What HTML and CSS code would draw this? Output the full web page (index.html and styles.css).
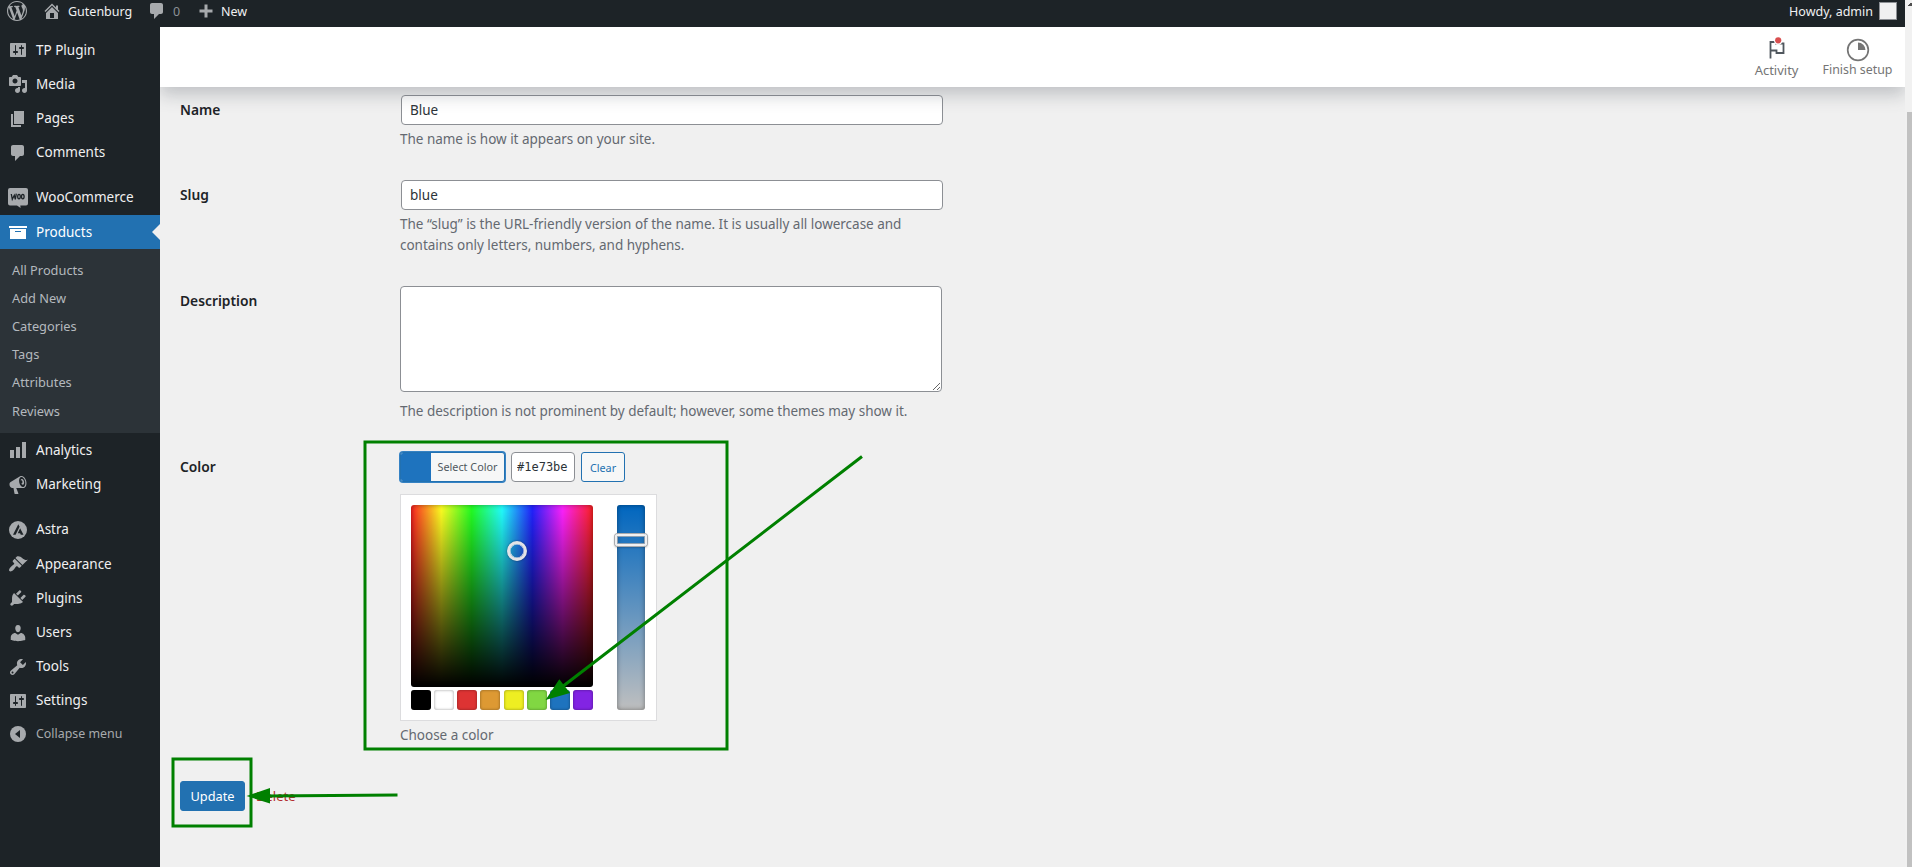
FILE: index.html
```html
<!DOCTYPE html>
<html lang="en">
<head>
<meta charset="utf-8">
<title>Edit Color</title>
<link rel="stylesheet" href="styles.css">
</head>
<body>
<div class="adminbar">
  <svg class="ab-icon ab-wp" viewBox="0 0 20 20"><path d="M20 10c0-5.51-4.49-10-10-10C4.48 0 0 4.49 0 10c0 5.52 4.48 10 10 10 5.51 0 10-4.48 10-10zM7.78 15.37L4.37 6.22c.55-.02 1.17-.08 1.17-.08.5-.06.44-1.13-.06-1.11 0 0-1.45.11-2.37.11-.18 0-.37 0-.58-.01C4.12 2.69 6.87 1.11 10 1.11c2.33 0 4.45.87 6.05 2.34-.68-.11-1.65.39-1.65 1.58 0 .74.45 1.36.9 2.1.35.61.55 1.36.55 2.46 0 1.49-1.4 5-1.4 5l-3.03-8.37c.54-.02.82-.17.82-.17.5-.05.44-1.25-.06-1.22 0 0-1.44.12-2.38.12-.87 0-2.33-.12-2.33-.12-.5-.03-.56 1.2-.06 1.22l.92.08 1.26 3.41zM17.41 10c.24-.64.74-1.87.43-4.25.7 1.29 1.05 2.71 1.05 4.25 0 3.29-1.73 6.24-4.4 7.78.97-2.59 1.94-5.2 2.92-7.78zM6.1 18.09C3.12 16.65 1.11 13.53 1.11 10c0-1.3.23-2.48.72-3.59C3.25 10.3 4.67 14.2 6.1 18.09zm4.03-6.63l2.58 6.98c-.86.29-1.76.45-2.71.45-.79 0-1.57-.11-2.29-.33.81-2.38 1.62-4.74 2.42-7.1z"/></svg>
  <svg class="ab-icon ab-home" viewBox="0 0 20 20"><path d="M16 8.5l1.53 1.53-1.06 1.06L10 4.6l-6.47 6.49-1.06-1.06L10 2.5l4 4v-2h2v4zm-6-2.46l6 5.99V18H4v-5.97zM12 17v-5H8v5h4z"/></svg>
  <span class="ab-site">Gutenburg</span>
  <svg class="ab-icon ab-comment" viewBox="0 0 20 20"><path d="M5 2h9c1.1 0 2 .9 2 2v7c0 1.1-.9 2-2 2h-2l-5 5v-5H5c-1.1 0-2-.9-2-2V4c0-1.1.9-2 2-2z"/></svg>
  <span class="ab-count">0</span>
  <svg class="ab-icon ab-plus" viewBox="0 0 20 20"><path d="M16.5 8.4v3h-5v5h-3v-5h-5v-3h5v-5h3v5z"/></svg>
  <span>New</span>
  <span class="ab-user">Howdy, admin</span>
  <span class="ab-avatar"></span>
</div>

<div class="layout">
  <nav class="sidebar">
    <a class="item"><svg viewBox="0 0 20 20"><path d="M18 16V4c0-.55-.45-1-1-1H3c-.55 0-1 .45-1 1v12c0 .55.45 1 1 1h14c.55 0 1-.45 1-1zM8 11h1c.55 0 1 .45 1 1s-.45 1-1 1H8v1.5c0 .28-.22.5-.5.5s-.5-.22-.5-.5V13H6c-.55 0-1-.45-1-1s.45-1 1-1h1V5.5c0-.28.22-.5.5-.5s.5.22.5.5V11zm5-2h-1c-.55 0-1-.45-1-1s.45-1 1-1h1V5.5c0-.28.22-.5.5-.5s.5.22.5.5V7h1c.55 0 1 .45 1 1s-.45 1-1 1h-1v5.5c0 .28-.22.5-.5.5s-.5-.22-.5-.5V9z"/></svg>TP Plugin</a>
    <a class="item"><svg viewBox="0 0 20 20"><path d="M13 11V4c0-.55-.45-1-1-1h-1.67L9 1H5L3.67 3H2c-.55 0-1 .45-1 1v7c0 .55.45 1 1 1h10c.55 0 1-.45 1-1zM7 4.5c1.38 0 2.5 1.12 2.5 2.5S8.38 9.5 7 9.5 4.5 8.38 4.5 7 5.62 4.5 7 4.5zM14 6h5v10.5c0 1.38-1.12 2.5-2.5 2.5S14 17.88 14 16.5s1.12-2.5 2.5-2.5c.17 0 .34.02.5.05V9h-3V6zm-4 8.05V13h2v3.5c0 1.38-1.12 2.5-2.5 2.5S7 17.88 7 16.5 8.12 14 9.5 14c.17 0 .34.02.5.05z"/></svg>Media</a>
    <a class="item"><svg viewBox="0 0 20 20"><path d="M6 15V2h10v13H6zm-1 1h8v2H3V5h2v11z"/></svg>Pages</a>
    <a class="item"><svg viewBox="0 0 20 20"><path d="M5 2h9c1.1 0 2 .9 2 2v7c0 1.1-.9 2-2 2h-2l-5 5v-5H5c-1.1 0-2-.9-2-2V4c0-1.1.9-2 2-2z"/></svg>Comments</a>
    <a class="item gap"><svg viewBox="0 0 20 20"><path d="M2 0h16a2 2 0 0 1 2 2v13.500a2 2 0 0 1-2 2h-5.700l.3 2.500-3.600-2.500H2a2 2 0 0 1-2-2V2a2 2 0 0 1 2-2z"/><g class="mark"><path d="M3.300 6l1 5.300 2-4 1 4 1-5.600"/><ellipse cx="11" cy="8.600" rx="1.300" ry="2.300"/><ellipse cx="15.200" cy="8.600" rx="1.300" ry="2.300"/></g></svg>WooCommerce</a>
    <a class="item current"><svg viewBox="0 0 20 20"><path d="M19 4v2H1V4h18zM2 7h16v10H2V7zm11 3V9H7v1h6z"/></svg>Products</a>
    <div class="submenu">
      <a>All Products</a><a>Add New</a><a>Categories</a><a>Tags</a><a>Attributes</a><a>Reviews</a>
    </div>
    <a class="item"><svg viewBox="0 0 20 20"><path d="M18 18V2h-4v16h4zm-6 0V7H8v11h4zm-6 0v-8H2v8h4z"/></svg>Analytics</a>
    <a class="item"><svg viewBox="0 0 20 20"><path fill-rule="evenodd" d="M18.150 5.940c.46 1.620.38 3.220-.02 4.480-.42 1.280-1.260 2.180-2.300 2.480-.3.080-.5.100-.8.100H8.230l2.220 5.500c.02.300-.2.500-.48.500H6.950c-.25 0-.5-.25-.48-.5l-1-5.500H4.250c-.5.040-1.100-.2-1.560-.64s-.88-1.080-1.060-1.880c-.24-.8-.2-1.560-.02-2.200.18-.62.58-1.080 1.060-1.300l9.020-5.420c.3-.2.600-.35.980-.46 1.040-.3 2.240.1 3.220.98s1.840 2.240 2.260 3.860zM15.550 11.920c1.500-.4 2.200-2.700 1.600-5.720-.65-2.700-2.500-4.500-4.200-4.120-1.600.4-2.250 2.800-1.640 5.720.68 2.800 2.500 4.550 4.240 4.120zM13.300 8.500c1-.15 1.300-1 1.100-1.900-.25-.95-1-1.500-1.900-1.250.35-.8.850-1.150 1.300-1.250 1-.2 1.850.9 2.200 2.500.3 1.600 0 2.900-.9 3.150-.65.100-1.300-.3-1.800-1.250z"/></svg>Marketing</a>
    <a class="item gap"><svg viewBox="0 0 20 20"><circle cx="10" cy="10" r="9"/><path class="cut" d="M10.300 4.200l1.300 2.500-4 8H5zM12.100 8.200l3.400 6.500h-2.700l-.7-1.500h-2.300z"/></svg>Astra</a>
    <a class="item"><svg viewBox="0 0 20 20"><path d="M14.480 11.060L7.410 3.990l1.500-1.500c.5-.56 2.300-.47 3.510.32 1.210.8 1.430 1.280 2.910 2.100 1.180.64 2.450 1.260 4.450.85zm-.71.71L6.700 4.700 4.930 6.470c-.39.39-.39 1.020 0 1.410l1.060 1.060c.39.39.39 1.030 0 1.420-.6.6-1.430 1.110-2.210 1.690-.35.26-.7.53-1.010.84C1.430 14.230.4 16.080 1.400 17.070c.99 1 2.840-.03 4.180-1.360.31-.31.58-.66.85-1.020.57-.78 1.080-1.610 1.690-2.210.39-.39 1.020-.39 1.410 0l1.060 1.060c.39.39 1.020.39 1.410 0z"/></svg>Appearance</a>
    <a class="item"><svg viewBox="0 0 20 20"><path d="M13.110 4.360L9.870 7.600 8 5.730l3.240-3.240c.35-.34 1.050-.2 1.560.32.52.51.66 1.210.31 1.550zm-8 1.770l.91-1.120 9.010 9.010-1.190.84c-.71.71-2.630 1.160-3.820 1.160H6.140L4.900 17.260c-.59.59-1.540.59-2.120 0-.59-.58-.59-1.530 0-2.120l1.240-1.240v-3.880c0-1.130.4-3.190 1.090-3.890zm7.260 3.970l3.240-3.240c.34-.35 1.040-.21 1.550.31.52.51.66 1.210.31 1.550l-3.240 3.250z"/></svg>Plugins</a>
    <a class="item"><svg viewBox="0 0 20 20"><path d="M10 9.250c-2.270 0-2.730-3.440-2.730-3.440C7 4.020 7.820 2 9.970 2c2.160 0 2.980 2.020 2.710 3.810 0 0-.41 3.440-2.680 3.440zm0 2.570L12.720 10c2.390 0 4.520 2.330 4.520 4.530v2.490s-3.650 1.130-7.240 1.130c-3.650 0-7.240-1.130-7.240-1.130v-2.490c0-2.250 1.940-4.480 4.470-4.480z"/></svg>Users</a>
    <a class="item"><svg viewBox="0 0 20 20"><path d="M16.680 9.770c-1.340 1.340-3.300 1.670-4.950.99l-5.410 6.520c-.99.99-2.590.99-3.580 0s-.99-2.590 0-3.570l6.520-5.420c-.68-1.650-.35-3.610.99-4.950 1.280-1.280 3.120-1.620 4.720-1.060l-2.890 2.890 2.820 2.820 2.860-2.870c.53 1.580.18 3.390-1.080 4.650zM3.810 16.210c.4.390 1.040.39 1.430 0 .4-.4.4-1.040 0-1.430-.39-.4-1.030-.4-1.430 0-.39.39-.39 1.030 0 1.430z"/></svg>Tools</a>
    <a class="item"><svg viewBox="0 0 20 20"><path d="M18 16V4c0-.55-.45-1-1-1H3c-.55 0-1 .45-1 1v12c0 .55.45 1 1 1h14c.55 0 1-.45 1-1zM8 11h1c.55 0 1 .45 1 1s-.45 1-1 1H8v1.500c0 .28-.22.5-.5.5s-.5-.22-.5-.5V13H6c-.55 0-1-.45-1-1s.45-1 1-1h1V5.500c0-.28.22-.5.5-.5s.5.22.5.5V11zm5-2h-1c-.55 0-1-.45-1-1s.45-1 1-1h1V5.500c0-.28.22-.5.5-.5s.5.22.5.5V7h1c.55 0 1 .45 1 1s-.45 1-1 1h-1v5.500c0 .28-.22.5-.5.5s-.5-.22-.5-.5V9z"/></svg>Settings</a>
    <a class="item collapse"><svg viewBox="0 0 20 20"><circle cx="10" cy="10" r="8"/><path class="cut" d="M12 6v8l-5-4z"/></svg><span>Collapse menu</span></a>
  </nav>

  <div class="content">
    <header class="woo-header">
      <div class="tab activity">
        <svg viewBox="0 0 24 24"><path d="M5.500 20.500V4H11v1.500h7.500V15h-7v-2.500h-6" fill="none" stroke="#50575e" stroke-width="1.800"/><circle cx="13.200" cy="2.800" r="4.200" fill="#fff"/><circle cx="13.200" cy="2.300" r="3.100" fill="#d94f4f"/></svg>
        Activity
      </div>
      <div class="tab">
        <svg viewBox="0 0 24 24"><circle cx="12" cy="12" r="10.300" fill="none" stroke="#757575" stroke-width="1.700"/><path d="M12 4.500a7.500 7.500 0 0 1 7.500 7.500H12z" fill="#757575"/></svg>
        Finish setup
      </div>
    </header>

    <form class="form">
      <div class="row">
        <label>Name</label>
        <div><input class="text" type="text" value="Blue"><p class="help">The name is how it appears on your site.</p></div>
      </div>
      <div class="row row-slug">
        <label>Slug</label>
        <div><input class="text" type="text" value="blue"><p class="help">The “slug” is the URL-friendly version of the name. It is usually all lowercase and<br>contains only letters, numbers, and hyphens.</p></div>
      </div>
      <div class="row row-desc">
        <label>Description</label>
        <div><textarea class="area"></textarea><p class="help">The description is not prominent by default; however, some themes may show it.</p></div>
      </div>
      <div class="row row-color">
        <label>Color</label>
        <div>
          <div class="controls">
            <button type="button" class="select"><span class="chip"></span><span class="select-text">Select Color</span></button>
            <input class="hex" type="text" value="#1e73be">
            <button type="button" class="clear">Clear</button>
          </div>
          <div class="picker">
            <div class="picker-left">
              <div class="square"><span class="ring"></span></div>
              <div class="palette">
                <i class="black"></i><i class="white"></i><i class="red"></i><i class="orange"></i><i class="yellow"></i><i class="green"></i><i class="blue"></i><i class="purple"></i>
              </div>
            </div>
            <div class="strip"><span class="thumb"></span></div>
          </div>
          <p class="help">Choose a color</p>
        </div>
      </div>
      <div class="actions"><button type="button" class="update">Update</button><a class="delete">Delete</a></div>
    </form>
  </div>

  <div class="scrollbar"><span class="scroll-thumb"></span></div>
</div>

<svg class="annotations" viewBox="0 0 1912 867">
  <g fill="none" stroke="#008000" stroke-width="3">
    <rect x="365" y="442" width="362" height="307"/>
    <rect x="173" y="759" width="78" height="67"/>
    <path d="M862 456.500L562 687M397.500 795L266 796"/>
  </g>
  <path fill="#008000" d="M545.500 700l13.800-20.700 10.700 13.800zM246.500 796l23.500-8v15.500z"/>
</svg>
</body>
</html>
```
FILE: styles.css
```css
* { box-sizing: border-box; }
body {
  margin: 0;
  height: 867px;
  overflow: hidden;
  position: relative;
  display: flex;
  flex-direction: column;
  background: #f0f0f0;
  color: #1d2327;
  font: 13.5px/21px "Noto Sans", sans-serif;
}
p { margin: 0; }
button, input, textarea { font-family: inherit; margin: 0; }

/* Top admin bar */
.adminbar {
  height: 27px;
  flex: none;
  display: flex;
  align-items: center;
  padding: 0 12px 5px 7px;
  background: #1d2327;
  color: #f0f0f1;
  font-size: 12.5px;
  z-index: 3;
}
.adminbar > * { flex: none; }
.ab-icon { width: 20px; height: 20px; fill: #a7aaad; }
.ab-home { margin-left: 15px; }
.ab-site { margin-left: 6px; width: 64px; }
.ab-comment { margin-left: 15px; }
.ab-count { margin-left: 6px; color: #8c9196; width: 8px; }
.ab-plus { margin-left: 15px; }
.adminbar .ab-plus + span { margin-left: 5px; }
.ab-user { margin-left: auto; }
.ab-avatar {
  width: 18px;
  height: 18px;
  margin: 0 3px 0 6px;
  background: #f0f0f1;
  border: 1px solid #8c8f94;
}

/* Columns below the bar */
.layout { flex: 1; min-height: 0; display: flex; }
.sidebar {
  width: 160px;
  flex: none;
  padding-top: 6px;
  background: #1d2327;
  z-index: 2;
}
.item {
  height: 34.220px;
  display: flex;
  align-items: center;
  gap: 8px;
  padding-left: 8px;
  color: #f0f0f1;
  position: relative;
}
.item svg { width: 20px; height: 20px; fill: #a7aaad; flex: none; }
.item .cut { fill: #1d2327; }
.item .mark { fill: none; stroke: #1d2327; stroke-width: 1.300; }
.item .mark ellipse:last-child { transform: translateX(-.4px); }
.gap { margin-top: 11px; }
.current { background: #2271b1; color: #fff; }
.current svg { fill: #fff; }
.current::after {
  content: "";
  position: absolute;
  right: 0;
  top: 9px;
  border: 8px solid transparent;
  border-left: 0;
  border-right-color: #f0f0f0;
}
.submenu {
  height: 184px;
  padding: 7px 0 0 12px;
  background: #2c3338;
  color: #b4b9be;
  font-size: 12.800px;
}
.submenu a { display: block; height: 28px; line-height: 28px; }
.submenu a:last-child { padding-top: .5px; }
.collapse { color: #a7aaad; font-size: 12.400px; height: 30px; }
.collapse svg { position: relative; top: 1px; }

.content { flex: 1; min-width: 0; }
.woo-header {
  height: 60px;
  display: flex;
  justify-content: flex-end;
  gap: 24px;
  padding: 11px 12.500px 0 0;
  background: #fff;
  box-shadow: 0 8px 16px rgba(85, 93, 102, .3);
  position: relative;
  z-index: 1;
}
.tab {
  display: flex;
  flex-direction: column;
  align-items: center;
  color: #757575;
  font-size: 12.400px;
  line-height: 18px;
}
.activity { font-size: 13px; }
.tab svg { width: 24px; height: 24px; margin-bottom: -1px; overflow: visible; }

/* Term form */
.form { padding: 8px 0 0 20px; }
.row {
  display: grid;
  grid-template-columns: 220px 543px;
  align-items: start;
  height: 85px;
}
.row-slug { height: 106px; }
.row-desc { height: 165px; }
.row-color { height: 330px; }
.row label { font-size: 13.800px; font-weight: 600; line-height: 30px; }
.row-color label { line-height: 32px; }
.text {
  display: block;
  width: 542px;
  height: 30px;
  margin: 0 0 4px 1px;
  padding: 0 8px;
  border: 1px solid #8c8f94;
  border-radius: 4px;
  background: #fff;
  color: #2c3338;
  font-size: 13.500px;
}
.area {
  display: block;
  width: 542px;
  height: 106px;
  margin-bottom: 9px;
  border: 1px solid #8c8f94;
  border-radius: 4px;
  background: #fff;
}
.help { color: #646970; white-space: nowrap; letter-spacing: -.02px; }

/* Colour picker */
.controls { display: flex; gap: 5px; height: 30px; margin-top: 1px; }
.select {
  width: 105px;
  margin-right: 1px;
  display: flex;
  padding: 0;
  border: 1px solid #2271b1;
  border-radius: 3px;
  background: #f6f7f7;
  box-shadow: 0 0 0 1px #3582c4;
  overflow: hidden;
}
.chip { width: 30px; height: 28px; background: #1e73be; }
.select-text {
  flex: 1;
  text-align: center;
  color: #50575e;
  font-size: 10.800px;
  line-height: 28px;
}
.hex {
  width: 64px;
  padding: 0 5px;
  border: 1px solid #8c8f94;
  border-radius: 4px;
  background: #fff;
  color: #2c3338;
  font: 12px "DejaVu Sans Mono", monospace;
}
.clear {
  width: 44px;
  margin-left: 1px;
  padding: 0;
  border: 1px solid #2271b1;
  border-radius: 3px;
  background: #f6f7f7;
  color: #2271b1;
  font-size: 10.800px;
}
.picker {
  width: 257px;
  height: 227px;
  margin: 12px 0 4px;
  padding: 10px;
  display: flex;
  gap: 24px;
  background: #fff;
  border: 1px solid #dcdcde;
}
.square {
  width: 182px;
  height: 182px;
  border-radius: 3px;
  background:
    linear-gradient(to bottom, rgba(0, 0, 0, 0), #000),
    linear-gradient(to right, #ff2222, #ffff22 16.670%, #22ff22 33.330%, #22ffff 50%, #2222ff 66.670%, #ff22ff 83.330%, #ff2222);
  box-shadow: inset 0 0 5px rgba(0, 0, 0, .4);
  position: relative;
}
.ring {
  position: absolute;
  left: 96px;
  top: 36px;
  width: 20px;
  height: 20px;
  border: 3.500px solid #e3e3e6;
  border-width: 3px;
  border-radius: 50%;
  box-shadow: 0 0 2px rgba(0, 0, 0, .5), inset 0 0 0 .5px #e3e3e6;
}
.palette { display: flex; justify-content: space-between; margin-top: 3px; }
.palette i {
  width: 20px;
  height: 20px;
  border-radius: 3px;
  box-shadow: inset 0 0 3px rgba(0, 0, 0, .4);
}
.black { background: #000; }
.white { background: #fff; }
.red { background: #dd3333; }
.orange { background: #dd9933; }
.yellow { background: #eeee22; }
.green { background: #81d742; }
.blue { background: #1e73be; }
.purple { background: #8224e3; }
.strip {
  width: 28px;
  height: 205px;
  border-radius: 3px;
  background: linear-gradient(to bottom, #0066bf, #bfbfbf);
  box-shadow: inset 0 0 5px rgba(0, 0, 0, .4);
  position: relative;
}
.thumb {
  position: absolute;
  left: -2px;
  top: 29px;
  width: 32px;
  height: 12px;
  border: 2px solid #f0f0f1;
  border-radius: 3px;
  box-shadow: 0 0 0 1px #a9abae, 0 1px 2px 1px rgba(0, 0, 0, .2), inset 0 0 0 1px rgba(170, 172, 176, .8);
}

.actions { display: flex; align-items: center; gap: 11px; }
.update {
  width: 65px;
  height: 30px;
  padding: 0;
  border: 1px solid #2271b1;
  border-radius: 3px;
  background: #2271b1;
  color: #fff;
  font-size: 12.800px;
}
.delete { color: #b32d2e; font-size: 13px; }

/* Page scrollbar */
.scrollbar {
  width: 7px;
  flex: none;
  margin-top: -27px;
  padding: 3px 0 0 2px;
  background: #f1f1f1;
  position: relative;
  z-index: 4;
  display: flex;
  flex-direction: column;
}
.scrollbar::before {
  content: "";
  width: 5px;
  height: 3px;
  margin-bottom: 106px;
  background: linear-gradient(135deg, transparent 45%, #505050 50%);
}
.scroll-thumb { flex: 1; background: #c1c1c1; }

.annotations {
  position: absolute;
  inset: 0;
  width: 1912px;
  height: 867px;
  z-index: 5;
  pointer-events: none;
}
```
